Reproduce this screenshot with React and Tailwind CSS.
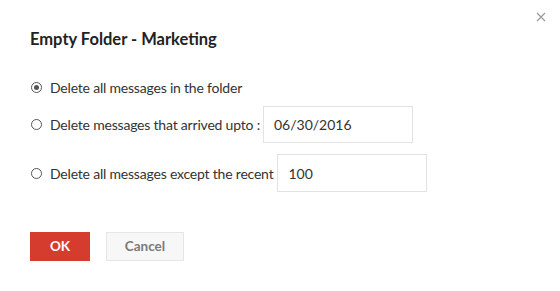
import React from "react";

function Radio({ checked }) {
  return (
    <span className="flex h-[11px] w-[11px] shrink-0 items-center justify-center rounded-full border border-[#555] bg-white">
      {checked && <span className="h-[5px] w-[5px] rounded-full bg-[#555]" />}
    </span>
  );
}

export default function App() {
  return (
    <div
      className="relative h-[291px] w-[560px] overflow-hidden bg-white pl-[30px] text-[#333]"
      style={{ fontFamily: "Lato, 'Open Sans', sans-serif" }}
    >
      <button className="absolute right-[14px] top-[12px] flex h-[10px] w-[10px] items-center justify-center text-[#9a9a9a]">
        <svg width="10" height="10" viewBox="0 0 10 10" fill="none" stroke="currentColor" strokeWidth="1.2">
          <path d="M1 1L9 9M9 1L1 9" />
        </svg>
      </button>

      <div className="pt-[27px] text-[16.5px] font-bold leading-[24px] text-[#222]">
        Empty Folder - Marketing
      </div>

      <div className="mt-[26px] flex h-5 items-center text-[14px] tracking-[-0.2px]">
        <span className="ml-[1px]"><Radio checked /></span>
        <span className="ml-[8px]">Delete all messages in the folder</span>
      </div>

      <div className="mt-[9px] flex h-[37px] items-center text-[14px] tracking-[-0.2px]">
        <span className="ml-[1px]"><Radio /></span>
        <span className="ml-[8px]">Delete messages that arrived upto :</span>
        <div className="ml-[3px] flex h-[37px] w-[150px] items-center border border-[#e3e3e3] pl-[10px] text-[14px] tracking-normal text-[#333]">
          06/30/2016
        </div>
      </div>

      <div className="mt-[11px] flex h-[38px] items-center text-[14px] tracking-[-0.2px]">
        <span className="ml-[1px]"><Radio /></span>
        <span className="ml-[8px]">Delete all messages except the recent</span>
        <div className="ml-[4px] flex h-[38px] w-[150px] items-center border border-[#e3e3e3] pl-[10px] text-[14px] tracking-normal text-[#333]">
          100
        </div>
      </div>

      <div className="mt-[40px] flex gap-[16px]">
        <button className="flex h-[29px] w-[60px] items-center justify-center bg-[#d53c2e] text-[13.5px] font-bold text-white">
          OK
        </button>
        <button className="flex h-[29px] w-[78px] items-center justify-center border border-[#e6e6e6] bg-[#f7f7f7] text-[13.5px] font-bold text-[#7a7a7a]">
          Cancel
        </button>
      </div>
    </div>
  );
}
